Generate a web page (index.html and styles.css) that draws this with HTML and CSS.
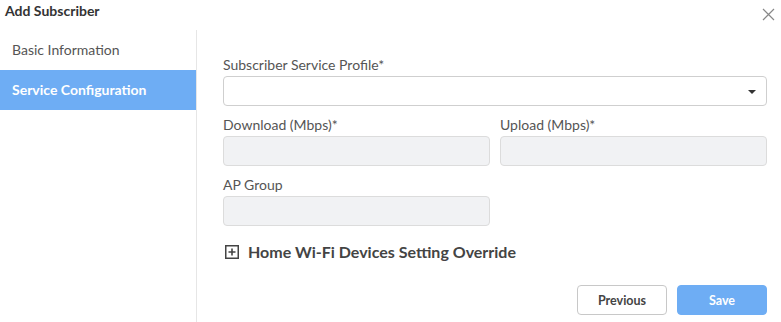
FILE: index.html
```html
<!DOCTYPE html>
<html lang="en">
<head>
    <meta charset="UTF-8">
    <meta name="viewport" content="width=device-width, initial-scale=1.0">
    <title>Add Subscriber</title>
    <link rel="stylesheet" href="styles.css">
</head>
<body>
    <div class="modal">
        <div class="modal-header">
            <h1 class="modal-title">Add Subscriber</h1>
            <button class="close" aria-label="Close">
                <svg width="13" height="13" viewBox="0 0 13 13">
                    <path d="M1 1 L12 12 M12 1 L1 12" stroke="#888" stroke-width="1.2" fill="none"/>
                </svg>
            </button>
        </div>
        <div class="modal-body">
            <ul class="steps">
                <li class="step">Basic Information</li>
                <li class="step active">Service Configuration</li>
            </ul>
            <div class="content">
                <div class="field">
                    <label class="label">Subscriber Service Profile*</label>
                    <div class="select">
                        <span class="caret"></span>
                    </div>
                </div>
                <div class="row">
                    <div class="field">
                        <label class="label">Download (Mbps)*</label>
                        <div class="input"></div>
                    </div>
                    <div class="field">
                        <label class="label">Upload (Mbps)*</label>
                        <div class="input"></div>
                    </div>
                </div>
                <div class="row">
                    <div class="field">
                        <label class="label">AP Group</label>
                        <div class="input"></div>
                    </div>
                </div>
                <div class="override">
                    <svg width="14" height="14" viewBox="0 0 14 14">
                        <rect x="0.75" y="0.75" width="12.5" height="12.5" fill="none" stroke="#444" stroke-width="1.5"/>
                        <path d="M7 3.5 V10.5 M3.5 7 H10.5" stroke="#444" stroke-width="1.6"/>
                    </svg>
                    <span>Home Wi-Fi Devices Setting Override</span>
                </div>
                <div class="actions">
                    <button class="btn btn-default">Previous</button>
                    <button class="btn btn-primary">Save</button>
                </div>
            </div>
        </div>
    </div>
</body>
</html>
```

FILE: styles.css
```css
body {
    margin: 0;
    background-color: #fff;
    font-family: Lato, "Open Sans", Arial, sans-serif;
    color: #555;
}
.modal {
    width: 781px;
    height: 322px;
    overflow: hidden;
}
.modal-header {
    display: flex;
    justify-content: space-between;
    align-items: flex-start;
    height: 30px;
}
.modal-title {
    margin: 0;
    padding: 2px 0 0 5px;
    font-size: 14px;
    line-height: 17px;
    font-weight: bold;
    color: #333;
}
.close {
    border: none;
    background: none;
    padding: 0;
    margin: 8px 6px 0 0;
    width: 13px;
    height: 13px;
    cursor: pointer;
}
.close svg {
    display: block;
}
.modal-body {
    display: flex;
    height: 292px;
}
.steps {
    list-style: none;
    margin: 0;
    padding: 0;
    width: 196px;
    border-right: 1px solid #e6e6e6;
    flex-shrink: 0;
}
.step {
    height: 40px;
    line-height: 40px;
    padding-left: 12px;
    font-size: 14px;
    color: #555;
}
.step.active {
    background-color: #6eadf4;
    color: #fff;
    font-weight: bold;
}
.content {
    flex: 1;
    padding: 27px 14px 0 26px;
}
.field {
    margin-bottom: 11px;
}
.label {
    display: block;
    font-size: 14px;
    line-height: 16px;
    margin-bottom: 3px;
    color: #555;
}
.select {
    position: relative;
    height: 30px;
    box-sizing: border-box;
    border: 1px solid #cfcfcf;
    border-radius: 4px;
    background-color: #fff;
}
.caret {
    position: absolute;
    right: 10px;
    top: 13px;
    border-left: 4px solid transparent;
    border-right: 4px solid transparent;
    border-top: 4px solid #333;
}
.row {
    display: grid;
    grid-template-columns: 1fr 1fr;
    gap: 10px;
}
.input {
    height: 30px;
    box-sizing: border-box;
    border: 1px solid #dcdcdc;
    border-radius: 4px;
    background-color: #f1f2f4;
}
.override {
    display: flex;
    align-items: center;
    gap: 9px;
    margin: 5px 0 0 2px;
    font-size: 16px;
    line-height: 20px;
    font-weight: bold;
    color: #444;
}
.override svg {
    display: block;
}
.actions {
    display: flex;
    justify-content: flex-end;
    gap: 10px;
    margin-top: 23px;
}
.btn {
    width: 90px;
    height: 30px;
    border-radius: 4px;
    font-family: inherit;
    font-size: 12.5px;
    font-weight: bold;
    cursor: pointer;
}
.btn-default {
    background-color: #fff;
    border: 1px solid #c8c8c8;
    color: #444;
}
.btn-primary {
    background-color: #6eadf4;
    border: 1px solid #6eadf4;
    color: #fff;
}
```
